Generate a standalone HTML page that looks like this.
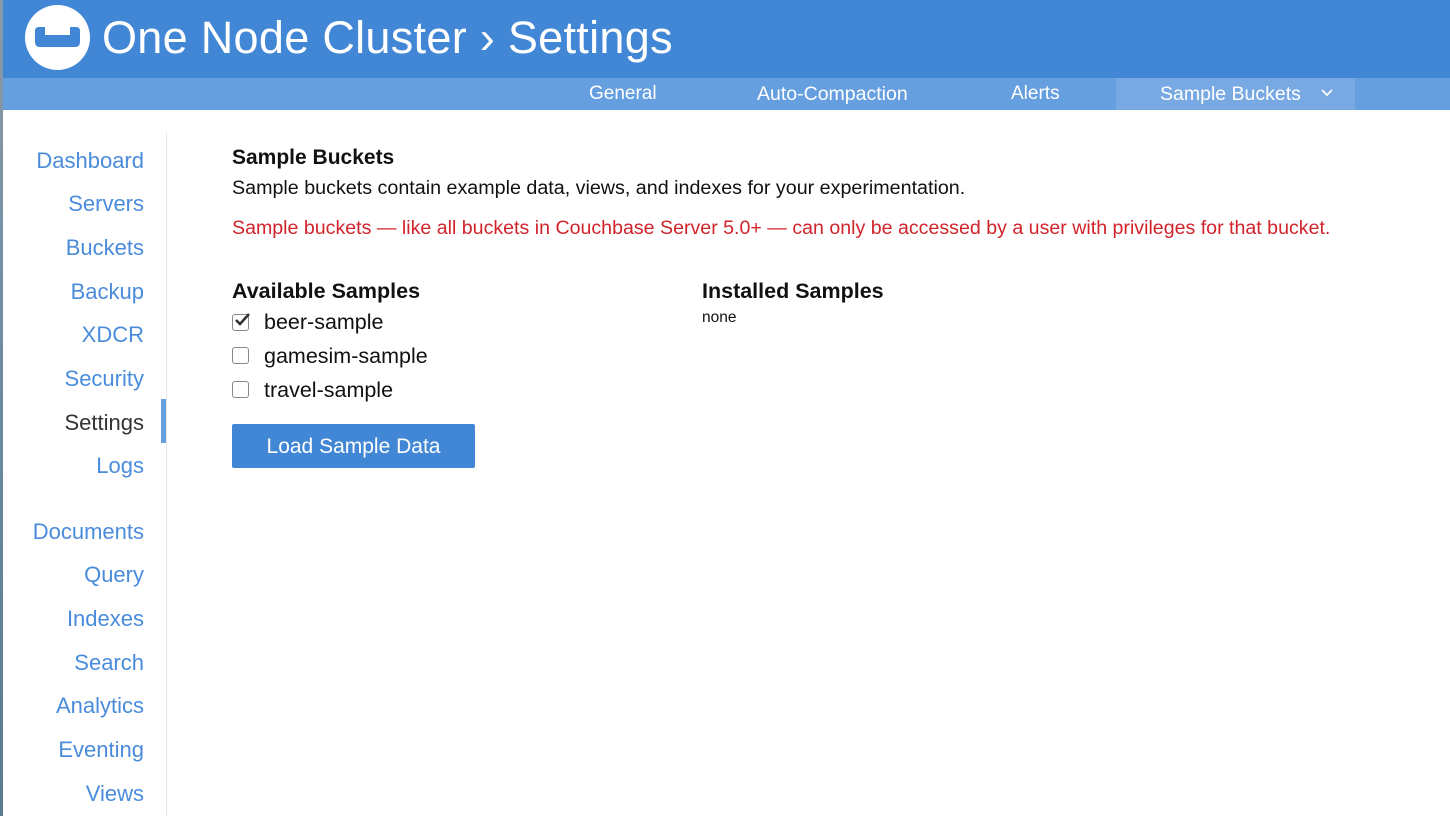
<!DOCTYPE html>
<html><head><meta charset="utf-8"><style>
*{margin:0;padding:0;box-sizing:border-box}
body{width:1450px;height:816px;overflow:hidden;background:#fff;font-family:"Liberation Sans",sans-serif;position:relative}
.strip{position:absolute;left:0;top:0;width:3px;height:816px;background:linear-gradient(#8a9aa8,#6a8aa0,#5a7a90)}
.hdr{position:absolute;left:3px;top:0;right:0;height:78px;background:#4287d6}
.sub{position:absolute;left:3px;top:78px;right:0;height:32px;background:#669fdf}
.t{position:absolute;white-space:nowrap}
.logo{position:absolute;left:25px;top:5px;width:65px;height:65px;border-radius:50%;background:#fff}
.side{position:absolute;right:1306px;font-size:22px;color:#4a8cdb;text-align:right}
.cb{position:absolute;left:232px;width:17px;height:17px;border:1.5px solid #888;border-radius:3px;background:#fff}
h{font-weight:bold}
</style></head><body>
<div class="strip"></div>
<div class="hdr"></div>
<div class="logo"><svg width="65" height="65" viewBox="0 0 65 65"><path d="M10 26 Q10 22 14 22 L20 22 L20 30 L45 30 L45 22 L51 22 Q55 22 55 26 L55 37 Q55 42 50 42 L15 42 Q10 42 10 37 Z" fill="#4287d6"/></svg></div>
<div class="t" style="left:102px;top:12px;font-size:45px;color:#fff;letter-spacing:0.3px">One Node Cluster › Settings</div>
<div class="sub"></div>
<div style="position:absolute;left:1116px;top:78px;width:239px;height:32px;background:#78a9e3"></div>
<div class="t" style="left:589px;top:83px;font-size:19px;color:#fff">General</div>
<div class="t" style="left:757px;top:83px;font-size:19.5px;color:#fff">Auto-Compaction</div>
<div class="t" style="left:1011px;top:83px;font-size:19px;color:#fff">Alerts</div>
<div class="t" style="left:1160px;top:83px;font-size:19.5px;color:#fff">Sample Buckets</div>
<svg style="position:absolute;left:1321px;top:89px" width="12" height="8"><path d="M1 1 L6 6 L11 1" stroke="#fff" stroke-width="1.8" fill="none"/></svg>
<div style="position:absolute;left:166px;top:132px;width:1px;height:684px;background:#e6e6e6"></div>
<div style="position:absolute;left:161px;top:399px;width:5px;height:44px;background:#669fdf"></div>
<div class="t side" style="top:148px">Dashboard</div>
<div class="t side" style="top:191px">Servers</div>
<div class="t side" style="top:235px">Buckets</div>
<div class="t side" style="top:279px">Backup</div>
<div class="t side" style="top:322px">XDCR</div>
<div class="t side" style="top:366px">Security</div>
<div class="t side" style="top:410px;color:#333">Settings</div>
<div class="t side" style="top:453px">Logs</div>
<div class="t side" style="top:519px">Documents</div>
<div class="t side" style="top:562px">Query</div>
<div class="t side" style="top:606px">Indexes</div>
<div class="t side" style="top:650px">Search</div>
<div class="t side" style="top:693px">Analytics</div>
<div class="t side" style="top:737px">Eventing</div>
<div class="t side" style="top:781px">Views</div>
<div class="t" style="left:232px;top:146px;font-size:21px;font-weight:bold;color:#111">Sample Buckets</div>
<div class="t" style="left:232px;top:177px;font-size:19.7px;color:#111">Sample buckets contain example data, views, and indexes for your experimentation.</div>
<div class="t" style="left:232px;top:217px;font-size:19.6px;color:#d1232a">Sample buckets — like all buckets in Couchbase Server 5.0+ — can only be accessed by a user with privileges for that bucket.</div>
<div class="t" style="left:232px;top:279px;font-size:21.5px;font-weight:bold;color:#111">Available Samples</div>
<div class="t" style="left:702px;top:279px;font-size:21.5px;font-weight:bold;color:#111">Installed Samples</div>
<div class="t" style="left:702px;top:309px;font-size:15.5px;color:#111">none</div>
<div class="cb" style="top:314px"></div>
<svg style="position:absolute;left:234px;top:312px" width="18" height="16"><path d="M2 8 L6 12 L15 2" stroke="#333" stroke-width="2.6" fill="none"/></svg>
<div class="t" style="left:264px;top:310px;font-size:21.5px;color:#111">beer-sample</div>
<div class="cb" style="top:347px"></div>
<div class="t" style="left:264px;top:344px;font-size:21.5px;color:#111">gamesim-sample</div>
<div class="cb" style="top:381px"></div>
<div class="t" style="left:264px;top:378px;font-size:21.5px;color:#111">travel-sample</div>
<div style="position:absolute;left:232px;top:424px;width:243px;height:44px;background:#4287d6;border-radius:2px;color:#fff;font-size:21px;text-align:center;line-height:46px">Load Sample Data</div>
</body></html>
